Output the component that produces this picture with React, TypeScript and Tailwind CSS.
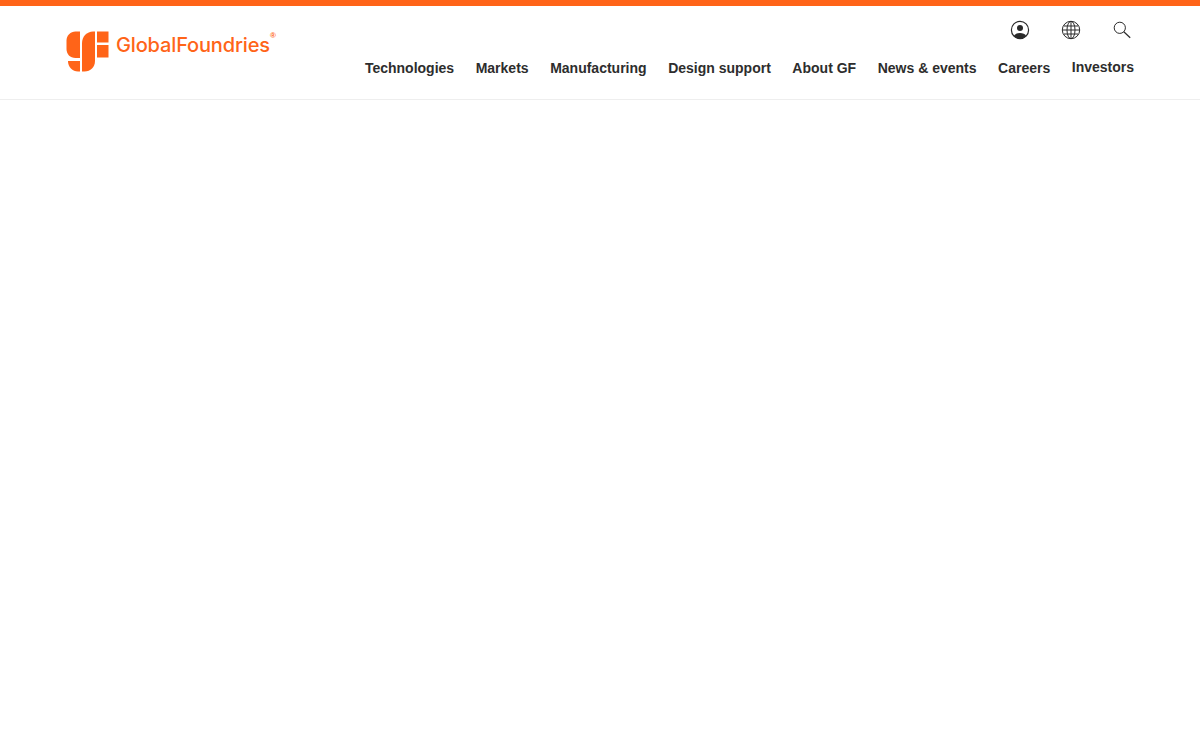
const navItems = ["Technologies", "Markets", "Manufacturing", "Design support", "About GF", "News & events", "Careers"];

function LogoMark() {
  return (
    <svg className="w-[43px] h-[41px] shrink-0" viewBox="0 0 43 41" fill="#ff6418">
      <path d="M14 0.5V27H9.5C4 27 0.5 23 0.5 18V9.5C0.5 4.5 4.5 0.5 9.5 0.5Z" />
      <path d="M2 30H14V40.5H12C6.5 40.5 2 36 2 30Z" />
      <path d="M16 12C16 5.5 21 0.5 27 0.5H29V30C29 36 24.5 40.5 18.5 40.5H16Z" />
      <rect x="31" y="0.5" width="11.5" height="11" />
      <rect x="31" y="14" width="11.5" height="12.5" />
    </svg>
  );
}

function UserIcon() {
  return (
    <svg className="w-5 h-5" viewBox="0 0 20 20">
      <circle cx="10" cy="10" r="8.6" fill="none" stroke="#2a2a2a" strokeWidth="1.2" />
      <circle cx="10" cy="8" r="3" fill="#2a2a2a" />
      <path d="M3.8 16c1.2-2.2 3.4-3 6.2-3s5 .8 6.2 3c-1.6 1.8-3.8 2.8-6.2 2.8s-4.6-1-6.2-2.8z" fill="#2a2a2a" />
    </svg>
  );
}

function GlobeIcon() {
  return (
    <svg className="w-5 h-5" viewBox="0 0 20 20" fill="none" stroke="#2a2a2a" strokeWidth="1">
      <circle cx="10" cy="10" r="8.7" />
      <ellipse cx="10" cy="10" rx="4" ry="8.7" />
      <path d="M10 1.3v17.4M1.3 10h17.4M2.8 6h14.4M2.8 14h14.4" />
    </svg>
  );
}

function SearchIcon() {
  return (
    <svg className="w-5 h-5" viewBox="0 0 20 20" fill="none" stroke="#2a2a2a" strokeWidth="1">
      <circle cx="7.8" cy="7.8" r="5.6" />
      <path d="M11.8 11.8l6.4 6" strokeWidth="1.2" />
    </svg>
  );
}

export default function App() {
  return (
    <div className="min-h-[750px] bg-white font-['Liberation_Sans',Arial,sans-serif]">
      <header className="border-t-[6px] border-b border-t-[#ff6418] border-b-[#eeeeee] h-[100px] pl-[66px] pr-[66px] flex justify-between">
        {/* Logo */}
        <div className="flex items-start pt-[25px]">
          <LogoMark />
          <div className="ml-[7px] mt-[6px] text-[#ff6418] text-[20px] leading-[16px] font-medium tracking-[-0.15px] font-['Inter',sans-serif]">
            GlobalFoundries
          </div>
          <span className="text-[#ff6418] text-[8px] leading-[2px] font-bold mt-[4px]">®</span>
        </div>

        {/* Utility icons and nav */}
        <div className="flex flex-col items-end">
          <div className="flex items-center gap-[31px] pt-[14px] pr-[2px]">
            <UserIcon />
            <GlobeIcon />
            <SearchIcon />
          </div>
          <nav className="flex items-start gap-[21.55px] mt-[18px] text-[14px] leading-[20px] font-bold text-[#2d2d2d]">
            {navItems.map((item) => (
              <a key={item} className="whitespace-nowrap">
                {item}
              </a>
            ))}
            <a className="whitespace-nowrap -mt-[1px]">Investors</a>
          </nav>
        </div>
      </header>
    </div>
  );
}
